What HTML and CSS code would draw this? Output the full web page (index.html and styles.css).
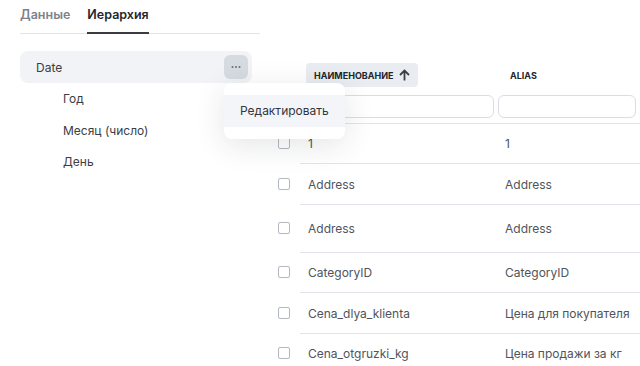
FILE: index.html
```html
<!DOCTYPE html>
<html lang="ru">
<head>
    <meta charset="UTF-8">
    <title>Иерархия</title>
    <link rel="stylesheet" href="styles.css">
</head>
<body>
    <div class="page">
        <div class="tabs">
            <div class="tab">Данные</div>
            <div class="tab active">Иерархия</div>
        </div>

        <div class="content">
            <div class="tree">
                <div class="tree-root">
                    <span>Date</span>
                    <button class="more-btn" aria-label="Ещё">
                        <svg width="12" height="4" viewBox="0 0 12 4"><circle cx="2.5" cy="2" r="1"/><circle cx="6" cy="2" r="1"/><circle cx="9.5" cy="2" r="1"/></svg>
                    </button>
                    <div class="menu">
                        <div class="menu-item">Редактировать</div>
                    </div>
                </div>
                <div class="tree-child">Год</div>
                <div class="tree-child">Месяц (число)</div>
                <div class="tree-child">День</div>
            </div>

            <div class="table">
                <div class="head">
                    <div></div>
                    <div class="head-cell"><span class="chip">Наименование
                        <svg width="11" height="12" viewBox="0 0 11 12"><path d="M5.5 11.5V1.8M1 6l4.5-4.5 4.5 4.5" fill="none" stroke="#3b3f48" stroke-width="1.8"/></svg></span></div>
                    <div class="head-cell alias">Alias</div>
                </div>
                <div class="filters">
                    <div></div>
                    <input class="filter" type="text">
                    <input class="filter" type="text">
                </div>
                <div class="row"><span class="check"></span><div class="cell">1</div><div class="cell">1</div></div>
                <div class="row r41"><span class="check"></span><div class="cell">Address</div><div class="cell">Address</div></div>
                <div class="row r48"><span class="check"></span><div class="cell">Address</div><div class="cell">Address</div></div>
                <div class="row"><span class="check"></span><div class="cell">CategoryID</div><div class="cell">CategoryID</div></div>
                <div class="row r41"><span class="check"></span><div class="cell">Cena_dlya_klienta</div><div class="cell">Цена для покупателя</div></div>
                <div class="row"><span class="check"></span><div class="cell">Cena_otgruzki_kg</div><div class="cell">Цена продажи за кг</div></div>
            </div>
        </div>
    </div>
</body>
</html>
```

FILE: styles.css
```css
* {
    margin: 0;
    padding: 0;
    box-sizing: border-box;
}

body {
    font-family: Inter, 'Noto Sans', sans-serif;
    background: #fff;
    color: #33363d;
    overflow: hidden;
}

.page {
    padding: 0 0 0 20px;
}

.tabs {
    display: flex;
    gap: 17px;
    width: 240px;
    height: 34px;
    border-bottom: 1px solid #e1e4ea;
}

.tab {
    font-size: 12.5px;
    font-weight: 600;
    color: #7d828d;
    padding-top: 7px;
    height: 34px;
}

.tab.active {
    color: #25272d;
    border-bottom: 2px solid #3a3b41;
}

.content {
    display: flex;
    margin-top: 17px;
}

/* tree */
.tree {
    width: 232px;
    flex-shrink: 0;
}

.tree-root {
    position: relative;
    display: flex;
    align-items: center;
    justify-content: space-between;
    height: 32px;
    padding: 0 4px 0 16px;
    background: #f1f3f6;
    border-radius: 8px;
    font-size: 12px;
    color: #3a3d45;
}

.more-btn {
    width: 24px;
    height: 24px;
    border: none;
    border-radius: 6px;
    background: #d6dae1;
    display: flex;
    align-items: center;
    justify-content: center;
}

.more-btn svg {
    fill: #6a6f7a;
}

.menu {
    position: absolute;
    left: 204px;
    top: 32px;
    width: 121px;
    padding: 12px 0;
    background: #fff;
    border-radius: 8px;
    box-shadow: 0 6px 30px rgba(30, 40, 60, 0.12);
    z-index: 5;
}

.menu-item {
    height: 32px;
    line-height: 32px;
    padding-left: 16px;
    background: #f3f5f8;
    font-size: 12px;
    color: #33363d;
}

.tree-child {
    height: 31.5px;
    line-height: 31.5px;
    padding-left: 43px;
    font-size: 12px;
    color: #3a3d45;
}

/* table */
.table {
    margin-left: 18px;
    flex: 1;
    font-size: 12px;
    color: #50545c;
}

.head,
.filters,
.row {
    display: grid;
    grid-template-columns: 30px 198px 1fr;
}

.head {
    height: 36px;
    padding-top: 12px;
}

.head-cell {
    display: flex;
    align-items: center;
    height: 24px;
    font-size: 9px;
    font-weight: 700;
    text-transform: uppercase;
    color: #22252c;
}

.chip {
    display: inline-flex;
    align-items: center;
    gap: 5px;
    height: 24px;
    margin-left: 6px;
    padding: 0 8px;
    background: #e9ecf1;
    border-radius: 4px;
}

.alias {
    padding-left: 12px;
}

.filters {
    padding-top: 8px;
    height: 36px;
}

.filter {
    height: 23px;
    border: 1px solid #d9dde5;
    border-radius: 6px;
    background: #fff;
    margin-right: 4px;
}

.filters .filter:last-child {
    width: 138px;
}

.row {
    height: 40px;
    align-items: center;
}

.row.r41 {
    height: 41px;
}

.row.r48 {
    height: 48px;
}

.row .cell {
    border-top: 1px solid #e1e4ea;
    height: 100%;
    display: flex;
    align-items: center;
    padding-left: 8px;
}

.row .cell:last-child {
    padding-left: 7px;
}

.check {
    width: 12px;
    height: 12px;
    margin-left: 8px;
    border: 1px solid #b4b8c1;
    border-radius: 2px;
}
```
